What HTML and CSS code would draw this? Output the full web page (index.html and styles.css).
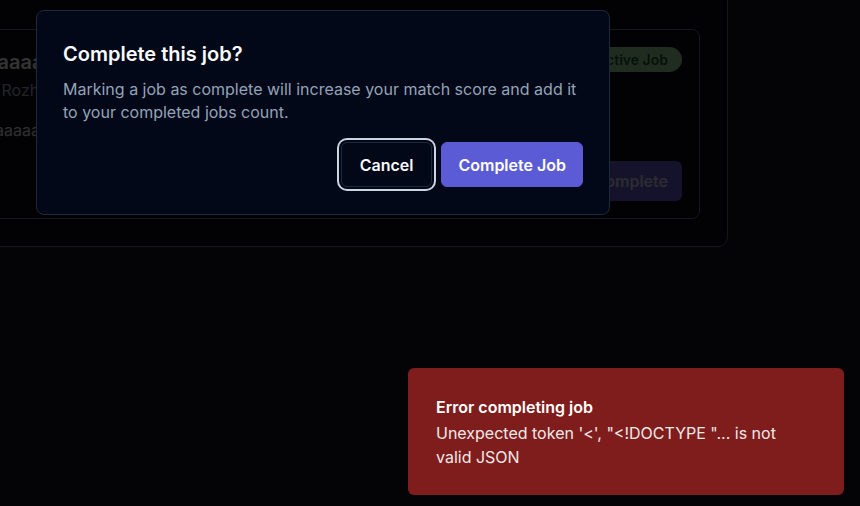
FILE: index.html
```html
<!DOCTYPE html>
<html lang="en">
<head>
<meta charset="utf-8">
<title>Complete this job?</title>
<link rel="stylesheet" href="styles.css">
</head>
<body>
<main class="page">
  <section class="jobs-panel">
    <article class="job-card">
      <div class="job-main">
        <h3 class="job-title">aaaaaaaaaaaaaaaaaaaaaaaa</h3>
        <p class="job-meta">• Rozhdestveno</p>
        <p class="job-desc">aaaaaaaaaaaaaaaaaaaaaaaaaaaaaaa</p>
      </div>
      <div class="job-side">
        <span class="badge">Active Job</span>
        <button class="btn-mark" type="button">Mark Complete</button>
      </div>
    </article>
  </section>
</main>

<div class="overlay"></div>

<div class="dialog" role="alertdialog" aria-labelledby="dlg-title">
  <h2 class="dialog-title" id="dlg-title">Complete this job?</h2>
  <p class="dialog-desc">Marking a job as complete will increase your match score and add it to your completed jobs count.</p>
  <div class="dialog-footer">
    <button class="btn btn-cancel" type="button">Cancel</button>
    <button class="btn btn-primary" type="button">Complete Job</button>
  </div>
</div>

<ol class="toasts">
  <li class="toast">
    <div class="toast-title">Error completing job</div>
    <div class="toast-desc">Unexpected token '&lt;', "&lt;!DOCTYPE "... is not valid JSON</div>
  </li>
</ol>
</body>
</html>
```

FILE: styles.css
```css
* { box-sizing: border-box; }

html, body {
  margin: 0;
  padding: 0;
  height: 100%;
  overflow: hidden;
}

body {
  background: #141423;
  font-family: Inter, "Noto Sans", "Liberation Sans", sans-serif;
  color: #f8fafc;
}

.page {
  display: flex;
  flex-direction: column;
}

.jobs-panel {
  width: 788px;
  margin: -30px 0 0 -60px;
  padding: 58px 27px 27px 27px;
  background: #0a0a14;
  border: 1px solid #6e6e86;
  border-radius: 10px;
}

.job-card {
  display: flex;
  justify-content: space-between;
  gap: 16px;
  height: 190px;
  padding: 17px;
  border: 1px solid #6e6e86;
  border-radius: 8px;
  background: #0a0a14;
}

.job-main {
  display: flex;
  flex-direction: column;
  min-width: 0;
}

.job-title {
  margin: 1px 0 0;
  font-size: 20px;
  line-height: 28px;
  font-weight: 600;
  color: #ffffff;
}

.job-meta {
  margin: 2px 0 0;
  padding-left: 2px;
  font-size: 16px;
  line-height: 24px;
  color: #b0b4c8;
}

.job-desc {
  margin: 17px 0 0;
  font-size: 16px;
  line-height: 22px;
  color: #e8e8f0;
}

.job-side {
  display: flex;
  flex-direction: column;
  justify-content: space-between;
  align-items: flex-end;
}

.badge {
  display: inline-flex;
  align-items: center;
  height: 25px;
  padding: 0 14px;
  border-radius: 999px;
  background: #a3d9a5;
  color: #145a2d;
  font-size: 14px;
  font-weight: 600;
}

.btn-mark {
  height: 40px;
  padding: 0 14px;
  border: 0;
  border-radius: 6px;
  background: #6b5fd6;
  color: rgba(255, 255, 255, 0.75);
  font: 600 16px Inter, "Noto Sans", sans-serif;
}

.overlay {
  position: fixed;
  inset: 0;
  background: rgba(0, 0, 0, 0.8);
}

.dialog {
  position: fixed;
  left: 36px;
  top: 10px;
  width: 574px;
  padding: 29px 26px 27px;
  background: #020817;
  border: 1px solid #1e293b;
  border-radius: 8px;
  display: flex;
  flex-direction: column;
}

.dialog-title {
  margin: 0;
  font-size: 20px;
  line-height: 28px;
  font-weight: 600;
  color: #f8fafc;
}

.dialog-desc {
  margin: 10px 0 0;
  font-size: 16px;
  line-height: 23px;
  color: #94a3b8;
}

.dialog-footer {
  display: flex;
  justify-content: flex-end;
  gap: 9px;
  margin-top: 18px;
}

.btn {
  height: 45px;
  padding: 0 16px;
  border-radius: 6px;
  font: 600 16px Inter, "Noto Sans", sans-serif;
  cursor: pointer;
}

.btn-cancel {
  padding: 0 18px;
  background: #020817;
  color: #f8fafc;
  border: 1px solid #1e293b;
  box-shadow: 0 0 0 2px #020817, 0 0 0 4px #cbd5e1;
}

.btn-primary {
  background: #5b5bd6;
  color: #ffffff;
  border: 1px solid #5b5bd6;
}

.toasts {
  position: fixed;
  right: 16px;
  bottom: 11px;
  margin: 0;
  padding: 0;
  list-style: none;
}

.toast {
  width: 436px;
  padding: 29px 64px 26px 28px;
  background: #7f1d1d;
  border-radius: 6px;
  color: #ffffff;
}

.toast-title {
  font-size: 16px;
  line-height: 20px;
  font-weight: 600;
}

.toast-desc {
  margin-top: 4px;
  font-size: 16px;
  line-height: 24px;
  opacity: 0.9;
}
```
